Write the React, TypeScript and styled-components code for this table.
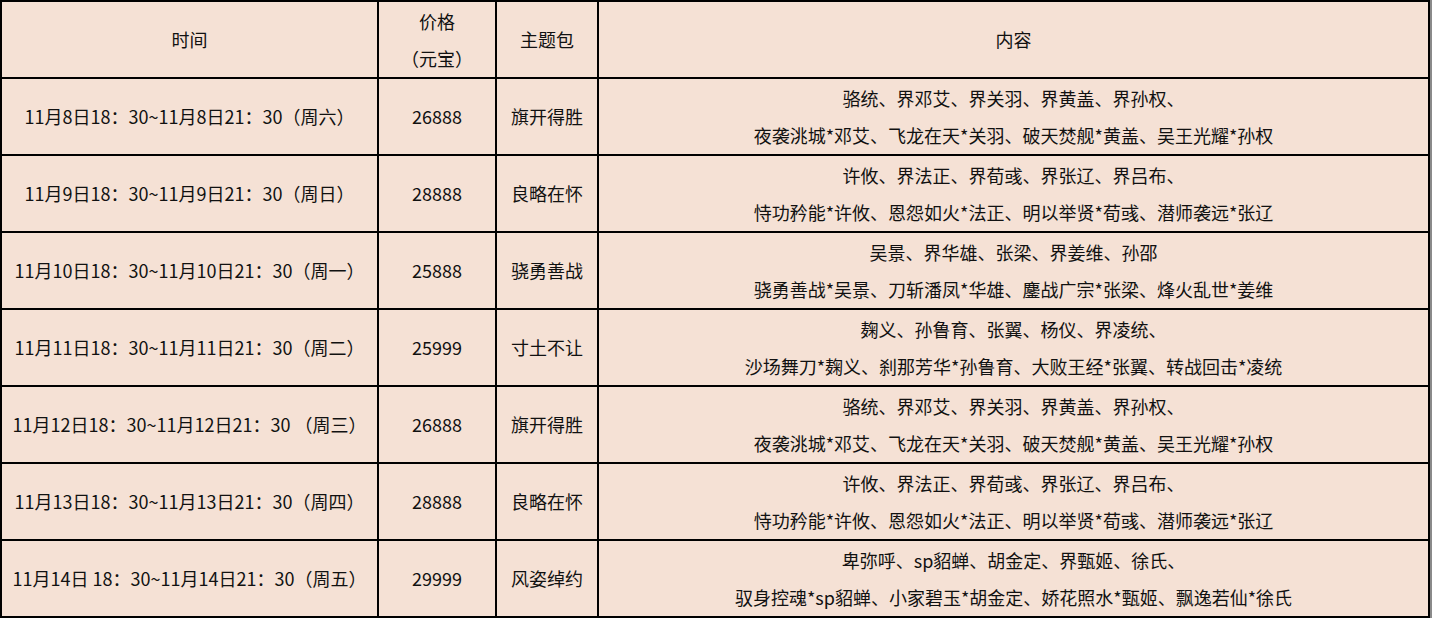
import React from 'react';
import styled, { createGlobalStyle } from 'styled-components';

const GlobalStyle = createGlobalStyle`
  html, body {
    margin: 0;
    padding: 0;
    background: #8a8a8a;
  }
  body {
    font-family: "Noto Sans CJK SC", "Noto Sans", sans-serif;
    color: #111;
  }
`;

const Table = styled.table`
  width: 1430px;
  table-layout: fixed;
  border-collapse: collapse;
  background: #f5e1d5;
  font-size: 18px;
  line-height: 37px;
`;

const Cell = styled.td`
  height: 75px;
  padding: 0;
  border: 2px solid #000;
  text-align: center;
  vertical-align: middle;
  white-space: nowrap;
  overflow: hidden;
`;

const HeadCell = styled(Cell).attrs({ as: 'th' })`
  font-weight: 400;
`;

interface Event {
  time: string;
  price: string;
  pack: string;
  heroes: string;
  skins: string;
}

const events: Event[] = [
  {
    time: '11月8日18：30~11月8日21：30（周六）',
    price: '26888',
    pack: '旗开得胜',
    heroes: '骆统、界邓艾、界关羽、界黄盖、界孙权、',
    skins: '夜袭洮城*邓艾、飞龙在天*关羽、破天焚舰*黄盖、吴王光耀*孙权'
  },
  {
    time: '11月9日18：30~11月9日21：30（周日）',
    price: '28888',
    pack: '良略在怀',
    heroes: '许攸、界法正、界荀彧、界张辽、界吕布、',
    skins: '恃功矜能*许攸、恩怨如火*法正、明以举贤*荀彧、潜师袭远*张辽'
  },
  {
    time: '11月10日18：30~11月10日21：30（周一）',
    price: '25888',
    pack: '骁勇善战',
    heroes: '吴景、界华雄、张梁、界姜维、孙邵',
    skins: '骁勇善战*吴景、刀斩潘凤*华雄、鏖战广宗*张梁、烽火乱世*姜维'
  },
  {
    time: '11月11日18：30~11月11日21：30（周二）',
    price: '25999',
    pack: '寸土不让',
    heroes: '麹义、孙鲁育、张翼、杨仪、界凌统、',
    skins: '沙场舞刀*麹义、刹那芳华*孙鲁育、大败王经*张翼、转战回击*凌统'
  },
  {
    time: '11月12日18：30~11月12日21：30 （周三）',
    price: '26888',
    pack: '旗开得胜',
    heroes: '骆统、界邓艾、界关羽、界黄盖、界孙权、',
    skins: '夜袭洮城*邓艾、飞龙在天*关羽、破天焚舰*黄盖、吴王光耀*孙权'
  },
  {
    time: '11月13日18：30~11月13日21：30（周四）',
    price: '28888',
    pack: '良略在怀',
    heroes: '许攸、界法正、界荀彧、界张辽、界吕布、',
    skins: '恃功矜能*许攸、恩怨如火*法正、明以举贤*荀彧、潜师袭远*张辽'
  },
  {
    time: '11月14日 18：30~11月14日21：30（周五）',
    price: '29999',
    pack: '风姿绰约',
    heroes: '卑弥呼、sp貂蝉、胡金定、界甄姬、徐氏、',
    skins: '驭身控魂*sp貂蝉、小家碧玉*胡金定、娇花照水*甄姬、飘逸若仙*徐氏'
  }
];

export default function App() {
  return (
    <>
      <GlobalStyle />
      <Table>
        <colgroup>
          <col style={{ width: 377 }} />
          <col style={{ width: 118 }} />
          <col style={{ width: 102 }} />
          <col />
        </colgroup>
        <thead>
          <tr>
            <HeadCell>时间</HeadCell>
            <HeadCell>
              价格
              <br />
              （元宝）
            </HeadCell>
            <HeadCell>主题包</HeadCell>
            <HeadCell>内容</HeadCell>
          </tr>
        </thead>
        <tbody>
          {events.map(ev => (
            <tr key={ev.time}>
              <Cell>{ev.time}</Cell>
              <Cell>{ev.price}</Cell>
              <Cell>{ev.pack}</Cell>
              <Cell>
                {ev.heroes}
                <br />
                {ev.skins}
              </Cell>
            </tr>
          ))}
        </tbody>
      </Table>
    </>
  );
}
